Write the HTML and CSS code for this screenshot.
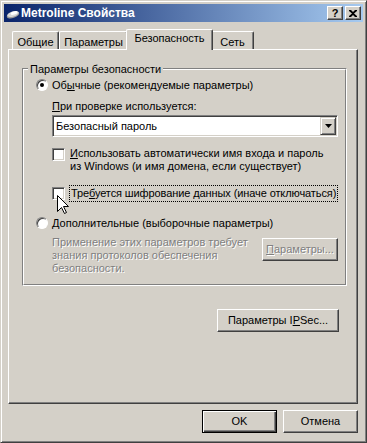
FILE: index.html
```html
<!DOCTYPE html>
<html>
<head>
<meta charset="utf-8">
<title>Metroline Свойства</title>
<link rel="stylesheet" href="styles.css">
</head>
<body>
<div class="window">
  <div class="titlebar">
    <svg class="title-icon" width="16" height="16" viewBox="0 0 16 16">
      <ellipse cx="8" cy="10" rx="6.5" ry="3" fill="#9a9a9a" transform="rotate(-18 8 10)"/>
      <ellipse cx="8" cy="9" rx="6" ry="2.6" fill="#d8d8d8" transform="rotate(-18 8 9)"/>
      <ellipse cx="9" cy="8" rx="3.5" ry="1.6" fill="#ffffff" transform="rotate(-18 9 8)"/>
    </svg>
    <span class="title-text">Metroline Свойства</span>
    <span class="cap-btn help">?</span>
    <span class="cap-btn close">
      <svg width="8" height="7" viewBox="0 0 8 7"><path d="M0 0h2l2 2 2-2h2v1L5 3.5 8 6v1H6L4 5 2 7H0V6l3-2.5L0 1z" fill="#000"/></svg>
    </span>
  </div>

  <div class="sheet">
    <div class="tabs">
      <div class="tab t1">Общие</div>
      <div class="tab t2">Параметры</div>
      <div class="tab t3 active">Безопасность</div>
      <div class="tab t4">Сеть</div>
    </div>
    <div class="panel">
      <div class="group">
        <div class="group-inner">
          <div class="group-title">Параметры безопасности</div>
          <div class="opt opt1"><span class="radio checked"></span><span>Об<u>ы</u>чные (рекомендуемые параметры)</span></div>
          <div class="label"><u>П</u>ри проверке используется:</div>
          <div class="combo">
            <span class="combo-text">Безопасный пароль</span>
            <span class="combo-btn"><svg width="7" height="4" viewBox="0 0 7 4"><path d="M0 0h7L3.5 4z" fill="#000"/></svg></span>
          </div>
          <div class="check check1"><span class="box"></span><span class="check-text"><u>И</u>спользовать автоматически имя входа и пароль<br>из Windows (и имя домена, если существует)</span></div>
          <div class="check check2"><span class="box"></span><span class="check-text focus">Тре<u>б</u>уется шифрование данных (иначе отключаться)</span></div>
          <div class="opt opt2"><span class="radio"></span><span><u>Д</u>ополнительные (выборочные параметры)</span></div>
          <div class="advanced">
            <div class="disabled-text">Применение этих параметров требует<br>знания протоколов обеспечения<br>безопасности.</div>
            <div class="btn small disabled"><u>П</u>араметры...</div>
          </div>
        </div>
      </div>
      <div class="ipsec-row"><div class="btn ipsec">Параметры I<u>P</u>Sec...</div></div>
    </div>
  </div>

  <div class="buttons">
    <div class="btn default">OK</div>
    <div class="btn">Отмена</div>
  </div>

  <svg class="cursor" width="12" height="20" viewBox="0 0 12 20">
    <path d="M0.5 0.5V16.5L4.5 12.5L7.5 18.5L9.5 17.5L6.5 11.5H11.5Z" fill="#fff" stroke="#000"/>
  </svg>
</div>
</body>
</html>
```

FILE: styles.css
```css
* {
  box-sizing: border-box;
}
html, body {
  margin: 0;
  padding: 0;
}
body {
  background: #d4d0c8;
  font-family: "Liberation Sans", Arial, sans-serif;
  font-size: 11px;
  line-height: 13px;
  color: #000;
}

/* window frame */
.window {
  position: relative;
  width: 367px;
  height: 443px;
  background: #d4d0c8;
  border: 1px solid;
  border-color: #d4d0c8 #404040 #404040 #d4d0c8;
  box-shadow: inset 1px 1px #fff, inset -1px -1px #808080;
  padding: 3px;
}
.titlebar {
  display: flex;
  align-items: center;
  height: 18px;
  background: linear-gradient(to right, #0a246a, #a6caf0);
  color: #fff;
  font-weight: bold;
}
.title-icon {
  margin-left: 1px;
}
.title-text {
  flex: 1;
  font-size: 12px;
}
.cap-btn {
  display: flex;
  align-items: center;
  justify-content: center;
  width: 16px;
  height: 14px;
  margin-right: 2px;
  background: #d4d0c8;
  border: 1px solid;
  border-color: #fff #404040 #404040 #fff;
  box-shadow: inset -1px -1px #808080;
  color: #000;
  font-weight: bold;
  font-size: 11px;
}

/* property sheet */
.sheet {
  margin: 7px 0 0 4px;
  width: 350px;
}
.tabs {
  display: flex;
  align-items: flex-end;
  height: 20px;
  padding-left: 4px;
}
.tab {
  height: 18px;
  padding-top: 4px;
  text-align: center;
  background: #d4d0c8;
  border-top: 1px solid #fff;
  border-left: 1px solid #fff;
  border-right: 1px solid #404040;
  box-shadow: inset -1px 0 #808080;
  border-radius: 2px 2px 0 0;
}
.t1 { width: 47px; }
.t2 { width: 69px; }
.t3 { width: 87px; }
.t4 { width: 43px; }
.tab.active {
  position: relative;
  z-index: 1;
  height: 21px;
  margin: 0 -2px -1px;
  padding-top: 2px;
}
.panel {
  height: 355px;
  border: 1px solid;
  border-color: #fff #404040 #404040 #fff;
  box-shadow: inset -1px -1px #808080;
}

/* group box */
.group {
  margin: 18px 10px 0 13px;
  border: 1px solid;
  border-color: #808080 #fff #fff #808080;
}
.group-inner {
  border: 1px solid;
  border-color: #fff #808080 #808080 #fff;
  padding: 0 7px 9px 12px;
}
.group-title {
  width: fit-content;
  margin: -7px 0 0 -8px;
  padding: 0 2px;
  background: #d4d0c8;
}
.opt {
  display: flex;
  align-items: center;
  height: 14px;
  margin-top: 2px;
}
.opt2 {
  margin-top: 14px;
}
.radio {
  position: relative;
  width: 12px;
  height: 12px;
  margin-right: 4px;
  border-radius: 50%;
  background: #fff;
  border: 1px solid;
  border-color: #808080 #fff #fff #808080;
  box-shadow: inset 1px 1px #404040;
}
.radio.checked::after {
  content: "";
  position: absolute;
  left: 3px;
  top: 3px;
  width: 4px;
  height: 4px;
  border-radius: 50%;
  background: #000;
}
.label {
  margin: 8px 0 0 16px;
}
.combo {
  display: flex;
  width: 286px;
  height: 22px;
  margin: 2px 0 0 16px;
  padding: 1px;
  background: #fff;
  border: 1px solid;
  border-color: #808080 #fff #fff #808080;
  box-shadow: inset 1px 1px #404040, inset -1px -1px #d4d0c8;
}
.combo-text {
  flex: 1;
  line-height: 18px;
  padding-left: 2px;
}
.combo-btn {
  display: flex;
  align-items: center;
  justify-content: center;
  width: 16px;
  background: #d4d0c8;
  border: 1px solid;
  border-color: #d4d0c8 #404040 #404040 #d4d0c8;
  box-shadow: inset 1px 1px #fff, inset -1px -1px #808080;
}
.check {
  display: flex;
  align-items: flex-start;
  margin-left: 16px;
}
.check1 {
  margin-top: 10px;
}
.check2 {
  margin-top: 12px;
}
.box {
  flex: none;
  width: 13px;
  height: 13px;
  margin-top: 1px;
  background: #fff;
  border: 1px solid;
  border-color: #808080 #fff #fff #808080;
  box-shadow: inset 1px 1px #404040, inset -1px -1px #d4d0c8;
}
.check-text {
  margin-left: 5px;
  white-space: nowrap;
}
.check2 .box {
  margin-top: 2px;
}
.focus {
  margin-left: 4px;
  padding: 1px;
  border: 1px dotted #000;
  letter-spacing: -0.1px;
}
.advanced {
  display: flex;
  margin: 6px 0 0 16px;
}
.disabled-text {
  flex: 1;
  color: #808080;
  text-shadow: 1px 1px #fff;
}

/* push buttons */
.btn {
  display: flex;
  align-items: center;
  justify-content: center;
  width: 75px;
  height: 23px;
  background: #d4d0c8;
  border: 1px solid;
  border-color: #fff #404040 #404040 #fff;
  box-shadow: inset -1px -1px #808080;
}
.btn.small {
  width: 76px;
  margin-top: 2px;
}
.btn.disabled {
  color: #808080;
  text-shadow: 1px 1px #fff;
}
.btn.default {
  border-color: #000;
  box-shadow: inset 1px 1px #fff, inset -1px -1px #404040, inset -2px -2px #808080;
}
.ipsec-row {
  display: flex;
  justify-content: flex-end;
  margin: 23px 18px 0 0;
}
.btn.ipsec {
  width: 122px;
}
.buttons {
  display: flex;
  justify-content: flex-end;
  gap: 6px;
  margin-top: 6px;
  padding-right: 5px;
}

.cursor {
  position: absolute;
  left: 56px;
  top: 194px;
}
```
